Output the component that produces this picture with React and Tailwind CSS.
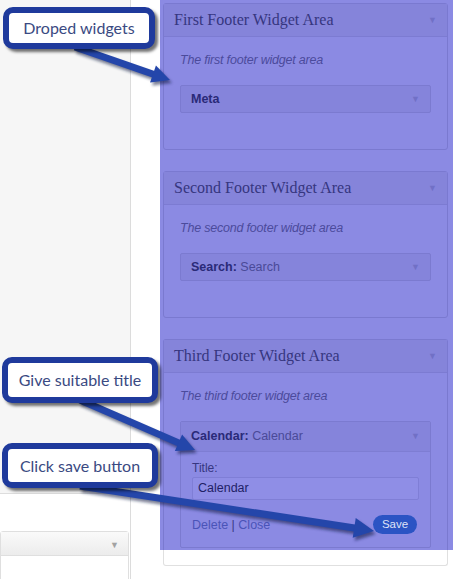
import React from "react";

function Caret({ className = "" }) {
  return <span className={"text-[9px] leading-none " + className}>▼</span>;
}

function Area({ title, desc, children, last }) {
  return (
    <div
      className={
        "shrink-0 border border-[#7a79d0] bg-[#8b8ae3] " +
        (last ? "border-b-0 rounded-t-[3px] flex-1" : "rounded-[3px]")
      }
    >
      <div className="h-[33px] bg-[#8584da] border-b border-[#7c7bd2] flex items-center justify-between pl-[10px] pr-[10px]">
        <span className="font-['Liberation_Serif',serif] text-[16px] text-[#36367f]">
          {title}
        </span>
        <Caret className="text-[#7170c6]" />
      </div>
      <div className="px-[16px] pt-[15px]">
        <p className="italic text-[12.5px] leading-[16px] text-[#4b4b9c] tracking-[-0.2px]">{desc}</p>
        {children}
      </div>
    </div>
  );
}

function Dropdown({ bold, rest }) {
  return (
    <div className="mt-[17px] h-[28px] border border-[#7b7ad0] bg-[#8584db] rounded-[2px] flex items-center justify-between pl-[10px] pr-[10px]">
      <span className="text-[12.5px] text-[#2a2a78]">
        <b>{bold}</b>
        {rest && <span className="text-[#4a4a98]">{rest}</span>}
      </span>
      <Caret className="text-[#7170c6]" />
    </div>
  );
}

function Callout({ className, text }) {
  return (
    <div
      className={
        "absolute border-[6px] border-[#1f3a9c] bg-white rounded-[10px] shadow-[3px_3px_3px_rgba(0,0,0,0.55)] flex items-center justify-center font-['Lato',sans-serif] font-normal text-[16px] text-[#3a4a82] " +
        className
      }
    >
      {text}
    </div>
  );
}

function Arrow({ x1, y1, x2, y2, len = 18, hw = 9 }) {
  const dx = x2 - x1;
  const dy = y2 - y1;
  const L = Math.hypot(dx, dy);
  const ux = dx / L;
  const uy = dy / L;
  const px = -uy;
  const py = ux;
  const bx = x2 - ux * len;
  const by = y2 - uy * len;
  const pts = `${x2},${y2} ${bx + px * hw},${by + py * hw} ${bx - px * hw},${by - py * hw}`;
  return (
    <g>
      <g transform="translate(2,3)" opacity="0.55" filter="url(#blur)">
        <line x1={x1} y1={y1} x2={bx + ux * 2} y2={by + uy * 2} stroke="#101840" strokeWidth="7" />
        <polygon points={pts} fill="#101840" />
      </g>
      <line x1={x1} y1={y1} x2={bx + ux * 2} y2={by + uy * 2} stroke="#2446aa" strokeWidth="7" />
      <polygon points={pts} fill="#2446aa" />
    </g>
  );
}

export default function App() {
  return (
    <div className="relative w-[455px] h-[579px] overflow-hidden bg-white flex font-['Liberation_Sans',Arial,sans-serif]">
      {/* left column */}
      <div className="w-[131px] shrink-0 border-r border-[#dcdcdc] flex flex-col">
        <div className="h-[494px] bg-[#f6f6f6] border-b border-[#dddddd] shrink-0" />
        <div className="pt-[37px] pr-[1px]">
          <div className="border border-[#dfdfdf] rounded-[3px] bg-white">
            <div className="h-[24px] bg-gradient-to-b from-[#fafafa] to-[#ececec] border-b border-[#dfdfdf] flex items-center justify-end pr-[9px] pt-[4px]">
              <Caret className="text-[#a2a2a2]" />
            </div>
            <div className="h-[40px]" />
          </div>
        </div>
      </div>
      <div className="w-[29px] shrink-0" />
      {/* widget areas */}
      <div className="w-[293px] shrink-0 flex flex-col">
        <div className="h-[550px] shrink-0 bg-[#8b8ae3] pt-[3px] pl-[3px] pr-[5px] flex flex-col gap-[21px] overflow-hidden">
          <Area title="First Footer Widget Area" desc="The first footer widget area">
            <Dropdown bold="Meta" />
            <div className="h-[36px]" />
          </Area>
          <Area title="Second Footer Widget Area" desc="The second footer widget area">
            <Dropdown bold="Search:" rest=" Search" />
            <div className="h-[36px]" />
          </Area>
          <Area title="Third Footer Widget Area" desc="The third footer widget area" last>
            <div className="mt-[17px] border border-[#7b7ad0] rounded-[2px]">
              <div className="h-[30px] bg-[#8584db] border-b border-[#7e7dd3] flex items-center justify-between pl-[10px] pr-[10px]">
                <span className="text-[12.5px] text-[#2a2a78]">
                  <b>Calendar:</b>
                  <span className="text-[#4a4a98]"> Calendar</span>
                </span>
                <Caret className="text-[#7170c6]" />
              </div>
              <div className="px-[11px] pt-[9px] pb-[12px]">
                <div className="text-[12px] leading-[14px] text-[#363680]">Title:</div>
                <div className="mt-[2px] h-[23px] border border-[#7f7ed6] bg-[#8f8ee6] rounded-[2px] flex items-center pl-[5px] text-[12.5px] text-[#1f1f66]">
                  Calendar
                </div>
                <div className="mt-[14px] flex items-center justify-between">
                  <span className="text-[12.5px] text-[#4a54b8] pt-[2px]">
                    Delete <span className="text-[#3a3a86]">|</span> Close
                  </span>
                  <span className="h-[19px] w-[44px] mr-[2px] rounded-full bg-[#2b54c4] flex items-center justify-center text-[11.5px] text-[#dfe2f7]">
                    Save
                  </span>
                </div>
              </div>
            </div>
          </Area>
        </div>
        <div className="ml-[3px] mr-[5px] h-[16px] border border-t-0 border-[#e0e0e0] rounded-b-[3px] bg-white shrink-0" />
      </div>

      {/* arrows */}
      <svg className="absolute inset-0 pointer-events-none" width="455" height="579">
        <defs>
          <filter id="blur" x="-20%" y="-20%" width="140%" height="140%">
            <feGaussianBlur stdDeviation="1.5" />
          </filter>
        </defs>
        <Arrow x1={75} y1={47} x2={170} y2={80} />
        <Arrow x1={80} y1={400} x2={195} y2={450} />
        <Arrow x1={80} y1={486} x2={374} y2={531} len={20} hw={10} />
      </svg>

      {/* callouts */}
      <Callout className="left-[3px] top-[7px] w-[152px] h-[42px]" text="Droped widgets" />
      <Callout className="left-[2px] top-[357px] w-[156px] h-[46px]" text="Give suitable title" />
      <Callout className="left-[2px] top-[443px] w-[156px] h-[45px]" text="Click save button" />
    </div>
  );
}
